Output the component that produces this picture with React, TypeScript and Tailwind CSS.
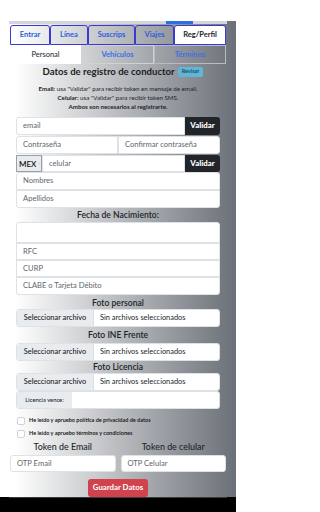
import { ChevronDown } from "lucide-react";

const font = { fontFamily: "Lato, 'Liberation Sans', sans-serif" };

function Field({ placeholder, className = "" }: { placeholder: string; className?: string }) {
  return (
    <div
      className={`flex items-center bg-white border border-[#dee2e6] px-[6px] text-[7.6px] leading-none text-[#5f666d] ${className}`}
    >
      {placeholder}
    </div>
  );
}

function FileInput() {
  return (
    <div className="flex h-[18px] overflow-hidden rounded-[3px] border border-[#dee2e6] bg-white text-[7.4px] leading-none text-[#212529]">
      <div className="flex w-[77px] items-center justify-center border-r border-[#dee2e6] bg-[#e9ecef] font-medium">
        Seleccionar archivo
      </div>
      <div className="flex items-center pl-[6px]">Sin archivos seleccionados</div>
    </div>
  );
}

function Label({ children, className = "" }: { children: React.ReactNode; className?: string }) {
  return (
    <div className={`text-center text-[8.6px] font-semibold leading-[8px] text-[#212529] ${className}`}>
      {children}
    </div>
  );
}

function Check({ text }: { text: string }) {
  return (
    <div className="flex h-[8px] items-center gap-[4px]">
      <div className="h-[8px] w-[8px] rounded-[2px] border border-[#cfd3d7] bg-white" />
      <span className="text-[5.5px] font-bold leading-none text-[#1d1d1d]">{text}</span>
    </div>
  );
}

export default function App() {
  const mainTabs = [
    { name: "Entrar", w: "w-[40px]" },
    { name: "Línea", w: "w-[38px]" },
    { name: "Suscrips", w: "w-[47px]" },
    { name: "Viajes", w: "w-[39px]" },
  ];

  return (
    <div className="flex h-[512px] w-[236px] flex-col overflow-hidden bg-white" style={font}>
      <div className="h-[21px] shrink-0 bg-white" />
      <div className="flex min-h-0 flex-1 flex-col bg-[linear-gradient(to_right,#ffffff_6%,#6b7078)]">
        {/* scroll indicator */}
        <div className="mx-[9px] flex h-[3px] shrink-0 bg-[#d4d6d9]">
          <div className="ml-[157px] w-[27px] bg-[#2f6fe4]" />
        </div>

        {/* main tabs */}
        <div className="mx-[10px] mt-[1px] flex h-[20px] shrink-0">
          {mainTabs.map((t) => (
            <div
              key={t.name}
              className={`${t.w} flex items-center justify-center rounded-t-[3px] border border-[#3a3ad0] text-[7.5px] font-bold text-[#2b5fe0]`}
            >
              {t.name}
            </div>
          ))}
          <div className="flex w-[52px] items-center justify-center rounded-t-[3px] border border-[#3a3ad0] bg-white text-[7.5px] font-bold text-[#212529]">
            Reg/Perfil
          </div>
        </div>

        {/* sub tabs */}
        <div className="mx-[10px] flex h-[19px] shrink-0">
          <div className="flex w-[71px] items-center justify-center bg-white text-[7.5px] text-[#212529]">Personal</div>
          <div className="flex w-[73px] items-center justify-center border border-[#d0d3d6] text-[7.5px] font-bold text-[#3b6fe8]">
            Vehículos
          </div>
          <div className="flex w-[72px] items-center justify-center border border-[#b8bbbf] text-[7.5px] font-bold text-[#3b6fe8]">
            Términos
          </div>
        </div>

        {/* title */}
        <div className="mt-[2px] flex h-[12px] items-center justify-center gap-[3px] pl-[10px]">
          <span className="text-[9.6px] font-bold leading-none text-[#1b1e21]">Datos de registro de conductor</span>
          <span className="rounded-[2px] bg-[#5fb6d6] px-[4px] py-[2.5px] text-[5.5px] font-bold leading-none text-[#1f4f64]">
            Revisar
          </span>
        </div>

        <div className="mt-[6px] text-center text-[6.2px] leading-[9px] text-[#212529]">
          <div>
            <b>Email:</b> usa "Validar" para recibir token en mensaje de email.
          </div>
          <div>
            <b>Celular:</b> usa "Validar" para recibir token SMS.
          </div>
          <div className="font-bold">Ambos son necesarios al registrarte.</div>
        </div>

        {/* form */}
        <div className="mx-[16px] mt-[6px] flex flex-col">
          <div className="flex h-[18px]">
            <Field placeholder="email" className="flex-1 rounded-l-[3px]" />
            <div className="flex w-[35px] items-center justify-center rounded-r-[3px] bg-[#212529] text-[7.8px] font-black text-white">
              Validar
            </div>
          </div>
          <div className="mt-[1px] flex h-[18px]">
            <Field placeholder="Contraseña" className="w-[102px] rounded-l-[3px]" />
            <Field placeholder="Confirmar contraseña" className="flex-1 rounded-r-[3px]" />
          </div>
          <div className="mt-[1px] flex h-[17px]">
            <div className="flex w-[26px] items-center gap-[2px] border border-[#9aa0a6] bg-[#e9ecef] pl-[2px] text-[8px] font-semibold text-[#111]">
              MEX
              <ChevronDown size={5} strokeWidth={2} className="text-[#555]" />
            </div>
            <Field placeholder="celular" className="flex-1" />
            <div className="flex w-[35px] items-center justify-center rounded-r-[3px] bg-[#212529] text-[7.8px] font-black text-white">
              Validar
            </div>
          </div>
          <Field placeholder="Nombres" className="h-[18px] rounded-t-[3px]" />
          <Field placeholder="Apellidos" className="h-[18px] rounded-b-[3px]" />

          <Label className="mt-[3px]">Fecha de Nacimiento:</Label>
          <div className="mt-[3px] h-[21px] rounded-t-[3px] border border-[#dee2e6] bg-white" />
          <Field placeholder="RFC" className="h-[17px]" />
          <Field placeholder="CURP" className="h-[17px]" />
          <Field placeholder="CLABE o Tarjeta Débito" className="h-[18px] rounded-b-[3px]" />

          <Label className="mt-[4px]">Foto personal</Label>
          <div className="mt-[2px]">
            <FileInput />
          </div>
          <Label className="mt-[4px]">Foto INE Frente</Label>
          <div className="mt-[4px]">
            <FileInput />
          </div>
          <Label className="mt-[2px]">Foto Licencia</Label>
          <div className="mt-[2px]">
            <FileInput />
          </div>
          <div className="flex h-[18px] rounded-[3px] border border-[#dee2e6] bg-white">
            <div className="flex w-[55px] items-center justify-center bg-[#e9ecef] text-[5.8px] font-medium text-[#212529]">
              Licencia vence:
            </div>
          </div>

          <div className="mt-[8px] flex flex-col gap-[5px] pl-[1px]">
            <Check text="He leído y apruebo política de privacidad de datos" />
            <Check text="He leído y apruebo términos y condiciones" />
          </div>
        </div>

        {/* tokens */}
        <div className="mx-[10px] mt-[4px] flex gap-[5px]">
          <div className="flex flex-1 flex-col gap-[3px]">
            <div className="text-center text-[8.9px] font-medium leading-[10px] text-[#212529]">Token de Email</div>
            <Field placeholder="OTP Email" className="h-[17px] rounded-[3px] text-[7.4px]" />
          </div>
          <div className="flex flex-1 flex-col gap-[3px]">
            <div className="text-center text-[8.9px] font-medium leading-[10px] text-[#212529]">Token de celular</div>
            <Field placeholder="OTP Celular" className="h-[17px] rounded-[3px] text-[7.4px]" />
          </div>
        </div>

        <div className="mt-[7px] flex justify-center">
          <div className="flex h-[18px] w-[60px] items-center justify-center rounded-[3px] bg-[#d0434c] text-[7.8px] font-bold text-white">
            Guardar Datos
          </div>
        </div>
        <div className="flex-1" />
      </div>
      <div className="h-[15px] shrink-0 bg-black">
        <div className="mx-[9px] h-[1px] bg-[#3a3a3a]" />
      </div>
    </div>
  );
}
